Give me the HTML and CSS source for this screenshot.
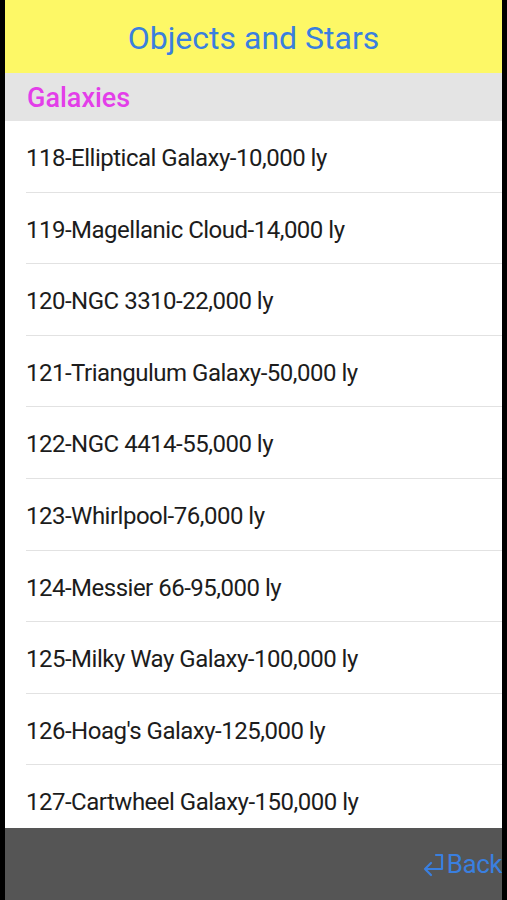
FILE: index.html
```html
<!doctype html>
<html lang="en">
<head>
    <meta charset="UTF-8">
    <title>Objects and Stars</title>
    <link rel="stylesheet" href="styles.css">
</head>
<body>
    <div id="screen">
        <div class="title">Objects and Stars</div>
        <div class="section">Galaxies</div>
        <ul class="list">
            <li>118-Elliptical Galaxy-10,000 ly</li>
            <li>119-Magellanic Cloud-14,000 ly</li>
            <li>120-NGC 3310-22,000 ly</li>
            <li>121-Triangulum Galaxy-50,000 ly</li>
            <li>122-NGC 4414-55,000 ly</li>
            <li>123-Whirlpool-76,000 ly</li>
            <li>124-Messier 66-95,000 ly</li>
            <li>125-Milky Way Galaxy-100,000 ly</li>
            <li>126-Hoag's Galaxy-125,000 ly</li>
            <li>127-Cartwheel Galaxy-150,000 ly</li>
        </ul>
        <div class="toolbar">
            <div class="back">
                <svg class="arrow" width="24" height="26" viewBox="0 0 24 26">
                    <path d="M14 3 H20 V17 H3 M9 11 L3 17 L9 23" fill="none" stroke="#3a7fdf" stroke-width="2.2" stroke-linecap="round" stroke-linejoin="round"/>
                </svg>
                <span>Back</span>
            </div>
        </div>
    </div>
</body>
</html>
```
FILE: styles.css
```css
*{
    margin:0;
    padding:0;
}
ul{
    list-style: none;
}
body{
    background:#000;
    font-family: Roboto, "Liberation Sans", sans-serif;
}
#screen{
    width:497px;
    height:900px;
    margin:0 5px;
    background:#fff;
    display:flex;
    flex-direction:column;
    overflow:hidden;
}
.title{
    height:73px;
    flex-shrink:0;
    background:#fdf866;
    color:#3a7fdf;
    font-size:32px;
    line-height:76px;
    text-align:center;
}
.section{
    height:48px;
    flex-shrink:0;
    background:#e4e4e4;
    color:#e33ee9;
    font-size:27px;
    font-weight:500;
    line-height:50px;
    padding-left:22px;
}
.list{
    flex:1;
    min-height:0;
    overflow:hidden;
}
.list li{
    height:70.6px;
    line-height:74px;
    margin-left:21px;
    border-bottom:1px solid #e2e2e2;
    color:#1c1c1c;
    font-size:24px;
    letter-spacing:-0.5px;
}
.toolbar{
    height:72px;
    flex-shrink:0;
    background:#555;
    display:flex;
    justify-content:flex-end;
    align-items:center;
}
.back{
    display:flex;
    align-items:center;
    color:#3a7fdf;
    font-size:26px;
    letter-spacing:-0.5px;
}
.back .arrow{
    margin-right:1px;
    margin-top:2px;
}
```
